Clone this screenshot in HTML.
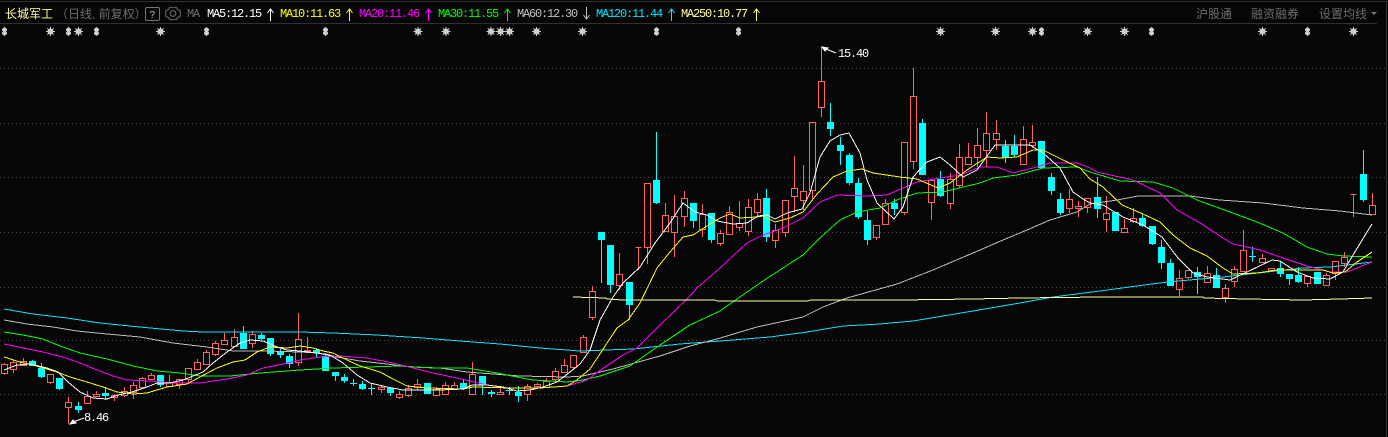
<!DOCTYPE html>
<html lang="zh"><head><meta charset="utf-8"><title>长城军工</title>
<style>
html,body{margin:0;padding:0;background:#060606;width:1388px;height:437px;overflow:hidden}
svg{display:block;position:absolute;left:0;top:0}
text{font-family:"Liberation Sans","Noto Sans CJK SC",sans-serif;font-size:12px}
.m{font-family:"Liberation Mono","DejaVu Sans Mono",monospace;font-size:12px;letter-spacing:-1.2px}
.l{fill:none;stroke-width:1;shape-rendering:crispEdges}
</style></head><body>
<svg width="1388" height="437" viewBox="0 0 1388 437" xmlns="http://www.w3.org/2000/svg">
<rect width="1388" height="437" fill="#060606"/>
<g class="l" stroke="#303030"><path d="M0 1.500H1388M0 23.500H1377M1386.500 1V437"/></g>
<g stroke="#4a4a4a" stroke-dasharray="1 3" class="l"><path d="M0 68.500H1386M0 123.500H1386M0 177.500H1386M0 232.500H1386M0 287.500H1386M0 340.500H1386M0 394.500H1386"/></g>

<!-- header -->
<text x="5" y="18" fill="#ffff99">长城军工</text>
<text x="56" y="18" fill="#6c6c6c">（日线, 前复权）</text>
<rect x="145.500" y="7.500" width="14" height="13" rx="1.500" fill="none" stroke="#777"/>
<text x="149.500" y="18" fill="#bbb" style="font-size:10px">?</text>
<g fill="none" stroke="#5a5a5a" stroke-width="1.300"><path d="M169.500 7.500h7l1 2 2.500 1 .5 3-.5 3-2.500 1-1 2h-7l-1-2-2.500-1-.5-3 .5-3 2.500-1z"/><circle cx="173" cy="13.500" r="2.800"/></g>
<text class="m" x="187" y="17" fill="#6c6c6c">MA</text>
<text class="m" x="207" y="17" fill="#ffffff">MA5:12.15</text>
<path d="M270.500 9V21M267.500 13l3-4 3 4" stroke="#fff" fill="none"/>
<text class="m" x="280" y="17" fill="#ffff00">MA10:11.63</text>
<path d="M349.500 9V21M346.500 13l3-4 3 4" stroke="#ff0" fill="none"/>
<text class="m" x="359" y="17" fill="#ff00ff">MA20:11.46</text>
<path d="M428.500 9V21M425.500 13l3-4 3 4" stroke="#f0f" fill="none"/>
<text class="m" x="438" y="17" fill="#00ff00">MA30:11.55</text>
<path d="M507.500 9V21M504.500 13l3-4 3 4" stroke="#0f0" fill="none"/>
<text class="m" x="517" y="17" fill="#c0c0c0">MA60:12.30</text>
<path d="M586.500 7V19M583.500 15l3 4 3-4" stroke="#c0c0c0" fill="none"/>
<text class="m" x="596" y="17" fill="#00e6ff">MA120:11.44</text>
<path d="M671.500 9V21M668.500 13l3-4 3 4" stroke="#0ef" fill="none"/>
<text class="m" x="681" y="17" fill="#ffffa0">MA250:10.77</text>
<path d="M756.500 9V21M753.500 13l3-4 3 4" stroke="#ffffa0" fill="none"/>
<text x="1196" y="18" fill="#6c6c6c">沪股通</text>
<text x="1251" y="18" fill="#6c6c6c">融资融券</text>
<text x="1319" y="18" fill="#6c6c6c">设置均线</text>
<path d="M1371 12h6l-3 3z" fill="#777"/>

<!-- markers -->
<defs>
<g id="s" stroke="#cfcfcf" fill="#cfcfcf"><circle cx="0" cy="0" r="3" stroke="none"/><path d="M-4.500 0H4.500M0-4.500V4.500M-3.200-3.200L3.200 3.200M-3.200 3.200L3.200-3.200" stroke-width="1"/></g>
<path id="d" d="M0-4.500L2.500-2.500V-1L1.500 0L2.500 1V2.500L0 4.500L-2.500 2.500V1L-1.500 0L-2.500-1V-2.500Z" fill="#cfcfcf"/>
</defs>
<use href="#d" x="4.500" y="31.500"/><use href="#s" x="50.500" y="31.500"/><use href="#d" x="68.500" y="31.500"/><use href="#s" x="78.500" y="31.500"/><use href="#d" x="96.500" y="31.500"/><use href="#s" x="160.500" y="31.500"/><use href="#d" x="206.500" y="31.500"/><use href="#d" x="325.500" y="31.500"/><use href="#s" x="418" y="31.500"/><use href="#s" x="446" y="31.500"/><use href="#s" x="491" y="31.500"/><use href="#s" x="500.500" y="31.500"/><use href="#s" x="509.500" y="31.500"/><use href="#s" x="536.500" y="31.500"/><use href="#s" x="582.500" y="31.500"/><use href="#d" x="656.500" y="31.500"/><use href="#d" x="738.500" y="31.500"/><use href="#s" x="940.500" y="31.500"/><use href="#s" x="995.500" y="31.500"/><use href="#s" x="1032.500" y="31.500"/><use href="#d" x="1041.500" y="31.500"/><use href="#s" x="1087.500" y="31.500"/><use href="#s" x="1124.500" y="31.500"/><use href="#d" x="1151.500" y="31.500"/><use href="#s" x="1262.500" y="31.500"/><use href="#d" x="1307.500" y="31.500"/><use href="#s" x="1353.500" y="31.500"/>

<!-- red candles -->
<path class="l" stroke="#ff6060" d="
M4.500 363V364M4.500 373V375M1.500 364.500h6v9h-6z
M13.500 360V362M13.500 369V373M10.500 362.500h6v7h-6z
M23.500 358V361M20.500 361.500h6v4h-6z
M50.500 382V384M47.500 374.500h6v8h-6z
M68.500 397V402M68.500 407V424M65.500 402.500h6v5h-6z
M87.500 391V396M87.500 403V404M84.500 396.500h6v7h-6z
M96.500 391V394M96.500 396V397M93.500 394.500h6v2h-6z
M114.500 394V395M114.500 397V401M111.500 395.500h6v2h-6z
M124.500 387V391M124.500 395V397M121.500 391.500h6v4h-6z
M133.500 382V385M133.500 392V399M130.500 385.500h6v7h-6z
M142.500 377V378M142.500 387V388M139.500 378.500h6v9h-6z
M151.500 373V375M151.500 379V380M148.500 375.500h6v4h-6z
M169.500 375V382M169.500 386V387M166.500 382.500h6v4h-6z
M179.500 379V379M179.500 384V389M176.500 379.500h6v5h-6z
M188.500 379V384M185.500 368.500h6v11h-6z
M197.500 359V362M194.500 362.500h6v7h-6z
M206.500 350V352M206.500 364V365M203.500 352.500h6v12h-6z
M215.500 341V343M215.500 354V356M212.500 343.500h6v11h-6z
M224.500 333V340M224.500 344V345M221.500 340.500h6v4h-6z
M234.500 329V337M234.500 346V347M231.500 337.500h6v9h-6z
M252.500 331V334M252.500 343V348M249.500 334.500h6v9h-6z
M298.500 313V339M298.500 362V366M295.500 339.500h6v23h-6z
M307.500 337V350M304.500 350.500h6v1h-6z
M381.500 385V387M381.500 389V393M378.500 387.500h6v2h-6z
M399.500 391V394M399.500 397V399M396.500 394.500h6v3h-6z
M408.500 385V388M408.500 395V397M405.500 388.500h6v7h-6z
M417.500 379V384M417.500 387V390M414.500 384.500h6v3h-6z
M436.500 387V389M436.500 395V396M433.500 389.500h6v6h-6z
M445.500 382V385M445.500 394V395M442.500 385.500h6v9h-6z
M454.500 382V385M454.500 389V390M451.500 385.500h6v4h-6z
M472.500 362V374M469.500 374.500h6v20h-6z
M500.500 387V392M497.500 392.500h6v2h-6z
M527.500 384V386M527.500 394V401M524.500 386.500h6v8h-6z
M537.500 383V384M537.500 386V388M534.500 384.500h6v2h-6z
M546.500 378V381M546.500 387V388M543.500 381.500h6v6h-6z
M555.500 368V371M555.500 379V382M552.500 371.500h6v8h-6z
M564.500 359V365M564.500 372V373M561.500 365.500h6v7h-6z
M573.500 367V370M570.500 355.500h6v12h-6z
M583.500 335V337M580.500 337.500h6v15h-6z
M592.500 286V291M592.500 317V320M589.500 291.500h6v26h-6z
M619.500 253V274M619.500 285V290M616.500 274.500h6v11h-6z
M638.500 247V270M635.500 247.500h6
M647.500 247V264M644.500 183.500h6v64h-6z
M665.500 203V215M665.500 231V232M662.500 215.500h6v16h-6z
M674.500 195V216M674.500 232V257M671.500 216.500h6v16h-6z
M684.500 191V198M684.500 216V227M681.500 198.500h6v18h-6z
M702.500 204V214M702.500 229V237M699.500 214.500h6v15h-6z
M720.500 230V233M720.500 243V246M717.500 233.500h6v10h-6z
M729.500 206V212M726.500 212.500h6v22h-6z
M739.500 201V223M739.500 227V231M736.500 223.500h6v4h-6z
M748.500 199V207M748.500 231V236M745.500 207.500h6v24h-6z
M757.500 193V199M757.500 212V217M754.500 199.500h6v13h-6z
M775.500 224V230M775.500 240V248M772.500 230.500h6v10h-6z
M785.500 232V237M782.500 200.500h6v32h-6z
M794.500 156V188M794.500 196V212M791.500 188.500h6v8h-6z
M803.500 165V191M803.500 200V210M800.500 191.500h6v9h-6z
M812.500 190V200M809.500 122.500h6v68h-6z
M821.500 47V81M821.500 107V117M818.500 81.500h6v26h-6z
M876.500 237V240M873.500 225.500h6v12h-6z
M885.500 199V203M882.500 203.500h6v21h-6z
M904.500 212V215M901.500 142.500h6v70h-6z
M913.500 68V96M913.500 161V169M910.500 96.500h6v65h-6z
M931.500 202V220M928.500 180.500h6v22h-6z
M950.500 173V179M950.500 203V209M947.500 179.500h6v24h-6z
M959.500 144V157M959.500 185V188M956.500 157.500h6v28h-6z
M968.500 143V157M968.500 164V165M965.500 157.500h6v7h-6z
M977.500 128V145M977.500 157V167M974.500 145.500h6v12h-6z
M986.500 112V133M986.500 150V167M983.500 133.500h6v17h-6z
M996.500 120V133M996.500 139V150M993.500 133.500h6v6h-6z
M1023.500 126V139M1020.500 139.500h6v25h-6z
M1032.500 125V142M1032.500 145V148M1029.500 142.500h6v3h-6z
M1069.500 189V199M1069.500 208V213M1066.500 199.500h6v9h-6z
M1078.500 201V206M1078.500 208V217M1075.500 206.500h6v2h-6z
M1087.500 207V213M1084.500 198.500h6v9h-6z
M1106.500 196V213M1106.500 219V232M1103.500 213.500h6v6h-6z
M1124.500 219V228M1121.500 228.500h6v4h-6z
M1133.500 208V218M1133.500 221V223M1130.500 218.500h6v3h-6z
M1179.500 270V278M1179.500 289V296M1176.500 278.500h6v11h-6z
M1188.500 277V279M1185.500 270.500h6v7h-6z
M1207.500 266V273M1204.500 273.500h6v9h-6z
M1225.500 284V288M1225.500 297V303M1222.500 288.500h6v9h-6z
M1234.500 266V269M1234.500 281V287M1231.500 269.500h6v12h-6z
M1243.500 230V250M1240.500 250.500h6v21h-6z
M1262.500 254V258M1262.500 262V263M1259.500 258.500h6v4h-6z
M1268.500 268.500h6v2h-6z
M1307.500 283V287M1304.500 276.500h6v7h-6z
M1326.500 273V275M1323.500 275.500h6v10h-6z
M1335.500 273V280M1332.500 261.500h6v12h-6z
M1344.500 252V257M1344.500 263V267M1341.500 257.500h6v6h-6z
M1353.500 194V217M1350.500 194.500h6
M1372.500 193V205M1369.500 205.500h6v9h-6z"/>

<!-- cyan candles -->
<path fill="#00ffff" shape-rendering="crispEdges" d="
M29 361h7v5h-7zM32 360h1v6h-1z
M38 368h7v9h-7zM41 363h1v15h-1z
M56 378h7v11h-7zM59 378h1v12h-1z
M75 406h7v4h-7zM78 402h1v11h-1z
M102 393h7v3h-7zM105 387h1v13h-1z
M157 375h7v10h-7zM160 375h1v12h-1z
M240 333h7v16h-7zM243 326h1v23h-1z
M258 335h7v4h-7zM261 333h1v7h-1z
M267 338h7v16h-7zM270 338h1v18h-1z
M277 352h7v3h-7zM280 349h1v9h-1z
M286 356h7v8h-7zM289 354h1v14h-1z
M313 350h7v3h-7zM316 348h1v9h-1z
M322 356h7v15h-7zM325 353h1v18h-1z
M332 372h7v4h-7zM335 372h1v9h-1z
M341 377h7v4h-7zM344 374h1v9h-1z
M350 383h7v1h-7zM353 379h1v7h-1z
M359 384h7v5h-7zM362 381h1v9h-1z
M368 388h7v1h-7zM371 384h1v11h-1z
M387 388h7v5h-7zM390 388h1v8h-1z
M424 383h7v11h-7z
M460 383h7v6h-7zM463 380h1v10h-1z
M479 376h7v9h-7zM482 376h1v19h-1z
M488 392h7v2h-7zM491 390h1v7h-1z
M506 390h7v1h-7zM509 387h1v8h-1z
M515 392h7v4h-7zM518 386h1v16h-1z
M598 232h7v8h-7zM601 240h1v43h-1z
M607 245h7v40h-7zM610 285h1v8h-1z
M626 282h7v23h-7zM629 305h1v15h-1z
M653 180h7v23h-7zM656 132h1v72h-1z
M690 203h7v18h-7zM693 221h1v7h-1z
M708 213h7v27h-7zM711 240h1v3h-1z
M763 198h7v39h-7zM766 189h1v53h-1z
M827 122h7v7h-7zM830 103h1v33h-1z
M837 145h7v6h-7zM840 137h1v28h-1z
M846 155h7v28h-7zM849 153h1v32h-1z
M855 183h7v34h-7zM858 178h1v41h-1z
M864 220h7v20h-7zM867 211h1v34h-1z
M891 203h7v6h-7zM894 199h1v16h-1z
M919 123h7v52h-7zM922 119h1v56h-1z
M937 179h7v17h-7zM940 171h1v26h-1z
M1002 146h7v12h-7zM1005 140h1v23h-1z
M1011 146h7v9h-7zM1014 135h1v22h-1z
M1038 141h7v27h-7zM1041 141h1v28h-1z
M1048 177h7v14h-7zM1051 173h1v22h-1z
M1057 199h7v14h-7zM1060 193h1v22h-1z
M1094 197h7v12h-7zM1097 177h1v41h-1z
M1112 212h7v19h-7z
M1139 218h7v8h-7zM1142 214h1v13h-1z
M1149 226h7v18h-7zM1152 226h1v19h-1z
M1158 247h7v16h-7zM1161 240h1v29h-1z
M1167 263h7v23h-7zM1170 259h1v27h-1z
M1194 272h7v5h-7zM1197 267h1v27h-1z
M1213 275h7v13h-7zM1216 268h1v20h-1z
M1249 256h7v1h-7zM1252 247h1v15h-1z
M1277 268h7v6h-7zM1280 262h1v15h-1z
M1286 274h7v5h-7zM1289 274h1v11h-1z
M1295 275h7v7h-7zM1298 267h1v16h-1z
M1314 272h7v12h-7z
M1360 174h7v26h-7zM1363 150h1v52h-1z"/>

<!-- moving averages -->
<polyline class="l" stroke="#00e6ff" points="4,309 33,314 67,318 100,323 150,328 183,331 203,332 300,332 333,333 377,335 423,338 460,341 500,344 540,348 580,351 633,349 680,344 733,340 770,337 807,332 843,326 880,324 913,321 967,312 1020,303 1053,297 1100,291 1137,286 1167,282 1223,277 1267,272 1303,268 1330,267 1372,262"/>
<polyline class="l" stroke="#bdbdbd" points="4,320 27,324 53,327 77,331 107,334 140,337 173,343 207,347 233,351 267,351 300,352 317,353 337,357 360,361 387,364 410,367 440,368 467,372 493,374 520,376 567,377 583,376 600,372 613,369 660,356 690,346 717,339 757,327 803,317 823,307 847,298 897,284 933,270 980,250 1003,240 1027,230 1050,220 1077,212 1090,204 1117,200 1138,196 1190,196 1220,200 1263,203 1303,208 1340,211 1372,215"/>
<polyline class="l" stroke="#00ff00" points="4,332 23,335 43,339 60,346 80,353 107,359 133,366 157,371 180,373 200,376 230,376 260,373 300,370 333,368 367,367 400,366 433,368 467,368 497,373 517,377 533,380 567,382 583,380 600,376 630,366 660,345 690,325 720,311 760,283 783,268 803,255 820,238 840,220 857,212 880,208 897,200 917,193 943,192 980,183 993,178 1017,175 1043,168 1077,167 1090,172 1120,181 1153,182 1173,188 1197,200 1230,212 1257,222 1283,233 1307,247 1327,254 1343,256 1372,257"/>
<polyline class="l" stroke="#ff00ff" points="4,344 23,348 43,352 63,357 80,363 97,370 113,376 127,380 150,381 173,383 200,383 227,379 247,375 263,368 283,364 300,360 320,357 340,356 367,358 393,363 413,368 433,373 457,378 487,385 507,388 540,388 567,386 587,380 602,369 623,355 637,348 660,325 687,299 697,288 720,268 747,243 763,235 783,228 803,218 820,202 837,195 867,196 887,195 903,188 917,182 940,178 960,175 980,167 997,167 1013,173 1033,168 1050,163 1077,163 1090,168 1097,172 1133,180 1160,193 1177,210 1200,223 1223,238 1233,244 1260,250 1283,258 1307,266 1330,272 1347,272 1372,262"/>
<polyline class="l" stroke="#ffff00" points="4,357 20,362 33,365 57,372 70,377 87,382 103,387 117,392 133,394 147,393 167,387 187,384 200,377 217,368 233,362 245,360 257,352 270,347 287,348 300,346 313,348 323,351 333,353 347,360 360,366 380,372 393,379 407,386 427,388 463,389 473,387 513,388 540,388 567,386 577,380 590,369 617,328 628,320 640,303 657,268 670,252 683,237 693,235 707,226 720,218 730,214 740,218 757,217 763,216 775,222 790,218 803,212 817,194 833,177 847,171 862,169 873,173 900,177 917,179 938,188 950,183 967,170 987,157 1000,158 1017,157 1033,150 1043,150 1063,160 1080,168 1090,179 1103,187 1122,205 1143,214 1160,222 1173,235 1190,248 1207,256 1223,268 1233,274 1257,273 1277,270 1323,270 1333,273 1345,272 1357,262 1372,252"/>
<polyline class="l" stroke="#ffffff" points="4,370 17,365 30,364 47,368 58,372 68,382 80,392 93,398 107,399 118,395 132,392 147,387 157,383 170,383 183,380 193,376 203,372 213,363 227,352 240,343 250,340 263,341 277,347 287,350 300,351 317,353 330,355 343,363 357,375 370,383 387,387 403,390 420,390 440,390 463,389 472,385 487,385 503,387 517,391 530,390 543,387 557,382 570,372 580,364 590,350 600,320 613,297 623,283 640,267 655,243 670,223 683,203 695,212 707,215 717,221 733,224 747,223 758,216 767,215 775,219 787,213 802,209 810,193 820,157 830,141 840,135 849,133 860,153 867,180 877,203 894,219 903,207 913,177 927,162 940,157 950,165 963,177 977,170 995,145 1030,145 1043,153 1060,168 1073,192 1083,199 1090,203 1103,205 1123,217 1143,225 1162,237 1178,258 1193,273 1207,277 1230,280 1247,272 1272,260 1280,261 1297,272 1313,278 1330,279 1343,272 1353,255 1372,224"/>
<polyline class="l" stroke="#ffffa0" points="573,297 606,298 607,299 623,300 715,300 717,301 808,301 810,300 872,300 900,300 973,299 1020,298 1100,297 1203,297 1204,298 1247,299 1303,300 1340,299 1372,298"/>

<!-- hi/lo labels -->
<path d="M822 47l6 1-3 3zM826 49l10 4M70 424l6-1-3-3zM73 422l11-4" stroke="#fff" fill="#fff" stroke-width="1"/>
<text class="m" x="838" y="57" fill="#fff" style="letter-spacing:-1.200px">15.40</text>
<text class="m" x="84" y="421" fill="#fff" style="letter-spacing:-1.200px">8.46</text>
</svg>
</body></html>
